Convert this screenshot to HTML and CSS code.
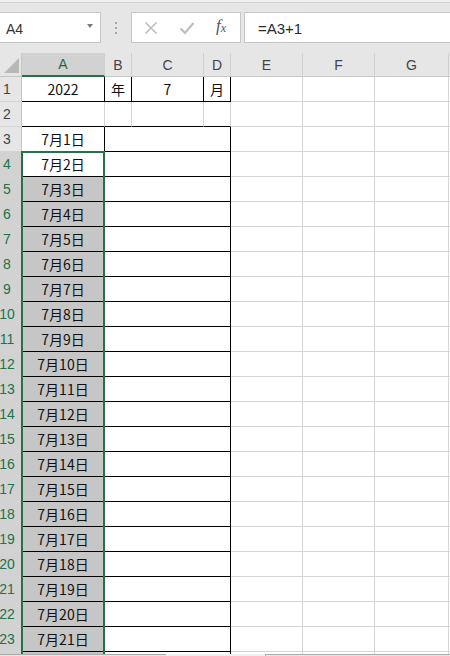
FILE: index.html
```html
<!DOCTYPE html>
<html lang="ja">
<head>
<meta charset="utf-8">
<title>Excel</title>
<link rel="stylesheet" href="styles.css">
</head>
<body>
<div class="app">
  <div class="toolbar">
    <div class="namebox">
      <span class="name">A4</span>
      <span class="caret"></span>
    </div>
    <div class="grip"><i></i><i></i><i></i></div>
    <div class="buttons">
      <svg class="ico" width="14" height="14" viewBox="0 0 14 14"><path d="M1.5 1.5 L12.5 12.5 M12.5 1.5 L1.5 12.5" stroke="#bdbdbd" stroke-width="1.6" fill="none"/></svg>
      <svg class="ico" width="16" height="14" viewBox="0 0 16 14"><path d="M1.5 7.5 L6 12 L14.5 2" stroke="#bdbdbd" stroke-width="2.2" fill="none"/></svg>
      <span class="fx">f<sub>x</sub></span>
    </div>
    <div class="formula">=A3+1</div>
  </div>

  <div class="sheet">
    <div class="grid">
      <div class="corner"><span class="tri"></span></div>
      <div class="ch sel">A</div>
      <div class="ch">B</div>
      <div class="ch">C</div>
      <div class="ch">D</div>
      <div class="ch">E</div>
      <div class="ch">F</div>
      <div class="ch">G</div>
      <div class="ch last"></div>

      <div class="rh">1</div>
      <div class="c bk">2022</div>
      <div class="c bk">年</div>
      <div class="c bk">7</div>
      <div class="c bk">月</div>
      <div class="c"></div><div class="c"></div><div class="c"></div><div class="c"></div>

      <div class="rh">2</div>
      <div class="c bb"></div>
      <div class="c bb"></div>
      <div class="c bb"></div>
      <div class="c bb"></div>
      <div class="c"></div><div class="c"></div><div class="c"></div><div class="c"></div>

      <div class="rh">3</div>
      <div class="c bk">7月1日</div>
      <div class="c bk span3"></div>
      <div class="c"></div><div class="c"></div><div class="c"></div><div class="c"></div>

      <div class="rh rs">4</div>
      <div class="c bk">7月2日</div>
      <div class="c bk span3"></div>
      <div class="c"></div><div class="c"></div><div class="c"></div><div class="c"></div>

      <div class="rh rs">5</div><div class="c bk shade">7月3日</div><div class="c bk span3"></div><div class="c"></div><div class="c"></div><div class="c"></div><div class="c"></div>
      <div class="rh rs">6</div><div class="c bk shade">7月4日</div><div class="c bk span3"></div><div class="c"></div><div class="c"></div><div class="c"></div><div class="c"></div>
      <div class="rh rs">7</div><div class="c bk shade">7月5日</div><div class="c bk span3"></div><div class="c"></div><div class="c"></div><div class="c"></div><div class="c"></div>
      <div class="rh rs">8</div><div class="c bk shade">7月6日</div><div class="c bk span3"></div><div class="c"></div><div class="c"></div><div class="c"></div><div class="c"></div>
      <div class="rh rs">9</div><div class="c bk shade">7月7日</div><div class="c bk span3"></div><div class="c"></div><div class="c"></div><div class="c"></div><div class="c"></div>
      <div class="rh rs">10</div><div class="c bk shade">7月8日</div><div class="c bk span3"></div><div class="c"></div><div class="c"></div><div class="c"></div><div class="c"></div>
      <div class="rh rs">11</div><div class="c bk shade">7月9日</div><div class="c bk span3"></div><div class="c"></div><div class="c"></div><div class="c"></div><div class="c"></div>
      <div class="rh rs">12</div><div class="c bk shade">7月10日</div><div class="c bk span3"></div><div class="c"></div><div class="c"></div><div class="c"></div><div class="c"></div>
      <div class="rh rs">13</div><div class="c bk shade">7月11日</div><div class="c bk span3"></div><div class="c"></div><div class="c"></div><div class="c"></div><div class="c"></div>
      <div class="rh rs">14</div><div class="c bk shade">7月12日</div><div class="c bk span3"></div><div class="c"></div><div class="c"></div><div class="c"></div><div class="c"></div>
      <div class="rh rs">15</div><div class="c bk shade">7月13日</div><div class="c bk span3"></div><div class="c"></div><div class="c"></div><div class="c"></div><div class="c"></div>
      <div class="rh rs">16</div><div class="c bk shade">7月14日</div><div class="c bk span3"></div><div class="c"></div><div class="c"></div><div class="c"></div><div class="c"></div>
      <div class="rh rs">17</div><div class="c bk shade">7月15日</div><div class="c bk span3"></div><div class="c"></div><div class="c"></div><div class="c"></div><div class="c"></div>
      <div class="rh rs">18</div><div class="c bk shade">7月16日</div><div class="c bk span3"></div><div class="c"></div><div class="c"></div><div class="c"></div><div class="c"></div>
      <div class="rh rs">19</div><div class="c bk shade">7月17日</div><div class="c bk span3"></div><div class="c"></div><div class="c"></div><div class="c"></div><div class="c"></div>
      <div class="rh rs">20</div><div class="c bk shade">7月18日</div><div class="c bk span3"></div><div class="c"></div><div class="c"></div><div class="c"></div><div class="c"></div>
      <div class="rh rs">21</div><div class="c bk shade">7月19日</div><div class="c bk span3"></div><div class="c"></div><div class="c"></div><div class="c"></div><div class="c"></div>
      <div class="rh rs">22</div><div class="c bk shade">7月20日</div><div class="c bk span3"></div><div class="c"></div><div class="c"></div><div class="c"></div><div class="c"></div>
      <div class="rh rs">23</div><div class="c bk shade">7月21日</div><div class="c bk span3"></div><div class="c"></div><div class="c"></div><div class="c"></div><div class="c"></div>
      <div class="rh rs"></div><div class="c bk shade"></div><div class="c bk span3"></div><div class="c"></div><div class="c"></div><div class="c"></div><div class="c"></div>
    </div>
    <div class="selection"></div>
    <div class="tabbar">
      <div class="tabs"></div>
      <div class="scroll"></div>
    </div>
  </div>
</div>
</body>
</html>
```

FILE: styles.css
```css
html, body {
  margin: 0;
  padding: 0;
  background: #ffffff;
}
.app {
  width: 450px;
  height: 656px;
  overflow: hidden;
  position: relative;
  font-family: "Liberation Sans", Arial, sans-serif;
}
.toolbar {
  height: 53px;
  box-sizing: border-box;
  background: #e6e6e6;
  border-top: 2px solid #f0f0f0;
  box-shadow: inset 0 1px 0 #d2d2d2;
  display: flex;
  align-items: flex-start;
  padding-top: 10px;
}
.namebox {
  margin-left: -1px;
  width: 102px;
  height: 31px;
  box-sizing: border-box;
  background: #fff;
  border: 1px solid #c6c6c6;
  display: flex;
  align-items: center;
  padding-left: 6px;
  padding-top: 3px;
  position: relative;
}
.name {
  font-size: 14px;
  color: #333;
}
.caret {
  position: absolute;
  left: 87px;
  top: 11px;
  width: 0;
  height: 0;
  border-left: 3.5px solid transparent;
  border-right: 3.5px solid transparent;
  border-top: 4px solid #7a7a7a;
}
.grip {
  width: 30px;
  height: 31px;
  display: flex;
  flex-direction: column;
  align-items: center;
  justify-content: center;
  gap: 3px;
}
.grip i {
  display: block;
  width: 2px;
  height: 2px;
  background: #a6a6a6;
}
.buttons {
  width: 110px;
  height: 31px;
  box-sizing: border-box;
  background: #fff;
  border: 1px solid #c6c6c6;
  display: flex;
  align-items: center;
  padding-left: 12px;
  gap: 21px;
}
.ico {
  display: block;
}
.fx {
  font-family: "Liberation Serif", "Times New Roman", serif;
  font-style: italic;
  font-size: 17px;
  color: #555;
  margin-left: 0;
  margin-top: -4px;
}
.fx sub {
  font-size: 12px;
  vertical-align: -1px;
}
.formula {
  margin-left: 3px;
  flex: 1;
  height: 31px;
  box-sizing: border-box;
  background: #fff;
  border: 1px solid #c6c6c6;
  border-right: none;
  padding-left: 13px;
  display: flex;
  align-items: center;
  padding-top: 2px;
  font-size: 15px;
  color: #2b2b2b;
}

.sheet {
  position: relative;
  height: 603px;
  overflow: hidden;
}
.grid {
  display: grid;
  grid-template-columns: 22px 83px 27px 72px 27px 72px 72px 74px 40px;
  grid-template-rows: 24px repeat(24, 25px);
}
.corner {
  background: #e6e6e6;
  border-right: 1px solid #c6c6c6;
  border-bottom: 1px solid #c6c6c6;
  box-sizing: border-box;
  position: relative;
}
.tri {
  position: absolute;
  right: 2px;
  bottom: 3px;
  width: 0;
  height: 0;
  border-left: 15px solid transparent;
  border-bottom: 15px solid #b8b8b8;
}
.ch {
  background: #e6e6e6;
  border-right: 1px solid #d0d0d0;
  border-bottom: 1px solid #c6c6c6;
  box-sizing: border-box;
  display: flex;
  align-items: center;
  justify-content: center;
  font-size: 14px;
  color: #444;
}
.ch.sel {
  background: #d2d2d2;
  color: #1e6b45;
  border-bottom: 2px solid #217346;
}
.rh {
  background: #e6e6e6;
  border-right: 1px solid #c6c6c6;
  border-bottom: 1px solid #d4d4d4;
  box-sizing: border-box;
  display: flex;
  align-items: center;
  justify-content: center;
  padding-right: 7px;
  font-size: 14px;
  color: #444;
}
.rh.rs {
  background: #d2d2d2;
  color: #217346;
}
.c {
  border-right: 1px solid #d4d4d4;
  border-bottom: 1px solid #d4d4d4;
  box-sizing: border-box;
  display: flex;
  align-items: center;
  justify-content: center;
  font-family: "Noto Sans CJK JP", "Liberation Sans", sans-serif;
  font-size: 14px;
  line-height: 1;
  color: #111;
  white-space: nowrap;
}
.c.bk {
  border-right-color: #000;
  border-bottom-color: #000;
}
.c.bb {
  border-bottom-color: #000;
}
.c.shade {
  background: #c6c6c6;
}
.span3 {
  grid-column: span 3;
}
.selection {
  position: absolute;
  left: 21px;
  top: 98px;
  width: 84px;
  height: 600px;
  box-sizing: border-box;
  border: 2px solid #217346;
  pointer-events: none;
}
.tabbar {
  position: absolute;
  left: 0;
  right: 0;
  top: 601px;
  height: 10px;
  background: #f0f0f0;
  display: flex;
}
.tabs {
  width: 166px;
  border-top: 1px solid #ababab;
  background: #e6e6e6;
}
.scroll {
  margin-left: 99px;
  flex: 1;
  border-top: 1px solid #ababab;
  border-left: 1px solid #ababab;
  background: #e6e6e6;
}
```
